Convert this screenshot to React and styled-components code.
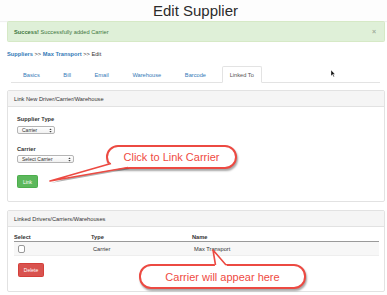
import React from "react";
import styled, { createGlobalStyle } from "styled-components";

const GlobalStyle = createGlobalStyle`
    body {
        margin: 0;
        background: #fff;
        font-family: "Liberation Sans", Arial, sans-serif;
        color: #333;
    }
`;

const Page = styled.div`
    position: relative;
    width: 387px;
    height: 295px;
    overflow: hidden;
    font-size: 5.7px;
`;

const Header = styled.div`
    height: 21px;
    display: flex;
    align-items: center;
    justify-content: center;
    padding-left: 4px;
    background: #fdfdfd;
    box-shadow: 0 1px 1px rgba(0, 0, 0, 0.06);

    h1 {
        margin: 0;
        font-size: 15px;
        font-weight: 400;
        color: #2b2b2b;
        line-height: 1;
    }
`;

const Content = styled.div`
    padding: 0 2px 0 7px;
`;

const Alert = styled.div`
    height: 21px;
    box-sizing: border-box;
    display: flex;
    align-items: center;
    justify-content: space-between;
    padding: 0 8px 0 6px;
    background: #dff0d8;
    border: 1px solid #d6e9c6;
    border-radius: 1.5px;
    color: #3c763d;

    b {
        font-weight: 700;
    }

    .close {
        color: #9fae9b;
        font-size: 7px;
        font-weight: 700;
    }
`;

const Breadcrumb = styled.div`
    margin-top: 8px;
    height: 8px;
    line-height: 8px;

    a {
        color: #337ab7;
        font-weight: 700;
        text-decoration: none;
    }
`;

const TabList = styled.ul`
    list-style: none;
    display: flex;
    margin: 8px 5px 0 4px;
    padding: 0 0 0 4px;
    border-bottom: 1px solid #e3e3e3;
    height: 16px;
`;

const Tab = styled.li`
    margin-right: 7.6px;
    margin-bottom: -1px;
    padding: 0 7px;
    display: flex;
    align-items: center;
    box-sizing: border-box;
    color: ${(p) => (p.$active ? "#555" : "#337ab7")};
    background: ${(p) => (p.$active ? "#fff" : "transparent")};
    border: 1px solid ${(p) => (p.$active ? "#e3e3e3" : "transparent")};
    border-bottom-color: ${(p) => (p.$active ? "#fff" : "transparent")};
    border-radius: 2px 2px 0 0;
    height: 17px;
`;

const Panel = styled.div`
    margin-top: ${(p) => p.$top}px;
    border: 1px solid #e2e2e2;
    border-radius: 2px;
    background: #fff;
`;

const PanelHeading = styled.div`
    height: 15px;
    display: flex;
    align-items: center;
    padding: 0 6px;
    background: #f5f5f5;
    border-bottom: 1px solid #e2e2e2;
    color: #333;
`;

const PanelBody = styled.div`
    padding: ${(p) => p.$pad};
`;

const Label = styled.div`
    font-weight: 700;
    height: 7px;
    line-height: 7px;
    margin-top: ${(p) => p.$top || 0}px;
`;

const SelectBox = styled.div`
    margin-top: ${(p) => p.$top}px;
    width: ${(p) => p.$w}px;
    height: 8px;
    box-sizing: border-box;
    display: flex;
    align-items: center;
    justify-content: space-between;
    padding: 0 2px 0 4px;
    border: 1px solid #b5b5b5;
    border-radius: 2px;
    background: linear-gradient(#fff, #f1f1f1);
    font-size: 5px;
    color: #333;
`;

const Button = styled.div`
    margin-top: ${(p) => p.$top}px;
    margin-left: ${(p) => p.$left || 0}px;
    width: ${(p) => p.$w}px;
    height: ${(p) => p.$h}px;
    display: flex;
    align-items: center;
    justify-content: center;
    border-radius: 1.5px;
    color: #fff;
    font-size: 5px;
    background: ${(p) => p.$bg};
    border: 1px solid ${(p) => p.$border};
    box-sizing: border-box;
`;

const Table = styled.table`
    width: 365px;
    border-collapse: collapse;
    margin-top: 5px;

    th {
        text-align: left;
        font-weight: 700;
        height: 9px;
        padding: 0;
        border-bottom: 1px solid #9a9a9a;
        vertical-align: middle;
    }

    td {
        height: 13px;
        padding: 0 0 0 2px;
        background: #f7f7f7;
        border-bottom: 1px solid #eee;
        vertical-align: middle;
    }
`;

const Checkbox = styled.div`
    width: 7px;
    height: 8px;
    box-sizing: border-box;
    margin-left: 2px;
    border: 1px solid #999;
    border-radius: 2px;
    background: #fff;
`;

const Bubble = styled.div`
    position: absolute;
    left: ${(p) => p.$x}px;
    top: ${(p) => p.$y}px;
    width: ${(p) => p.$w}px;
    height: ${(p) => p.$h}px;
    box-sizing: border-box;
    display: flex;
    align-items: center;
    justify-content: center;
    border: 2px solid #ec4a42;
    border-radius: 12px;
    background: #fff;
    box-shadow: 1px 2px 2px rgba(0, 0, 0, 0.35);
    color: #ef4b43;
    font-size: 11px;
    white-space: nowrap;
`;

const Overlay = styled.svg`
    position: absolute;
    left: 0;
    top: 0;
    pointer-events: none;
`;

const Arrows = () => (
    <svg width="3" height="5" viewBox="0 0 3 5">
        <path d="M0.3 2 L1.5 0.5 L2.7 2 Z M0.3 3 L1.5 4.5 L2.7 3 Z" fill="#444" />
    </svg>
);

const tabs = ["Basics", "Bill", "Email", "Warehouse", "Barcode", "Linked To"];

const App = () => {
    return (
        <Page>
            <GlobalStyle />
            <Header>
                <h1>Edit Supplier</h1>
            </Header>
            <Content>
                <Alert>
                    <span><b>Success!</b> Successfully added Carrier</span>
                    <span className="close">×</span>
                </Alert>
                <Breadcrumb>
                    <a href="#">Suppliers</a> &gt;&gt; <a href="#">Max Transport</a> &gt;&gt; Edit
                </Breadcrumb>
                <TabList>
                    {tabs.map((t) => (
                        <Tab key={t} $active={t === "Linked To"}>{t}</Tab>
                    ))}
                </TabList>

                <Panel $top={7}>
                    <PanelHeading>Link New Driver/Carrier/Warehouse</PanelHeading>
                    <PanelBody $pad="9px 9px 13px 9px">
                        <Label>Supplier Type</Label>
                        <SelectBox $top={3} $w={38}>Carrier <Arrows /></SelectBox>
                        <Label $top={12}>Carrier</Label>
                        <SelectBox $top={2} $w={57}>Select Carrier <Arrows /></SelectBox>
                        <Button $top={12} $w={21} $h={13} $bg="#5cb85c" $border="#4cae4c">Link</Button>
                    </PanelBody>
                </Panel>

                <Panel $top={8}>
                    <PanelHeading>Linked Drivers/Carriers/Warehouses</PanelHeading>
                    <PanelBody $pad="0 6px 14px 6px">
                        <Table>
                            <thead>
                                <tr>
                                    <th style={{ width: 77 }}>Select</th>
                                    <th style={{ width: 101 }}>Type</th>
                                    <th>Name</th>
                                </tr>
                            </thead>
                            <tbody>
                                <tr>
                                    <td><Checkbox /></td>
                                    <td>Carrier</td>
                                    <td>Max Transport</td>
                                </tr>
                            </tbody>
                        </Table>
                        <Button $top={7} $left={4} $w={26} $h={14} $bg="#d9534f" $border="#d43f3a">Delete</Button>
                    </PanelBody>
                </Panel>
            </Content>

            <Bubble $x={106} $y={145} $w={131} $h={24}>Click to Link Carrier</Bubble>
            <Bubble $x={139} $y={264} $w={167} $h={25}>Carrier will appear here</Bubble>

            <Overlay width="387" height="295" viewBox="0 0 387 295">
                <polygon points="51,183 112,165 130,169" fill="rgba(0,0,0,0.3)" />
                <polygon points="50,181 111,163 129,167" fill="#fff" />
                <polyline points="111,163.5 50,181 128,167.5" fill="none" stroke="#ec4a42" strokeWidth="1.6" strokeLinejoin="round" />
                <polygon points="213,250 215,266 227,266" fill="#fff" />
                <polyline points="215.5,265 213,250 226,265" fill="none" stroke="#ec4a42" strokeWidth="1.6" strokeLinejoin="round" />
                <path d="M331 70 L331 76 L332.5 74.6 L333.6 77 L334.4 76.6 L333.3 74.3 L335 74.2 Z" fill="#111" stroke="#fff" strokeWidth="0.4" />
            </Overlay>
        </Page>
    );
};

export default App;
